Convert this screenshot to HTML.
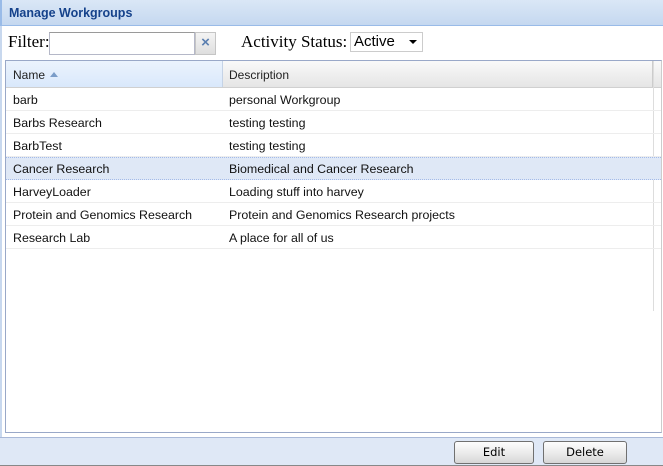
<!DOCTYPE html>
<html><head><style>
*{margin:0;padding:0;box-sizing:border-box}
body{width:663px;height:466px;overflow:hidden;background:#fff;font-family:"Liberation Sans",Arial,sans-serif;font-size:12px;position:relative}
.title{position:absolute;left:0;top:0;width:663px;height:26px;background:linear-gradient(#dae7f6,#c5d8f0);border-bottom:1px solid #99bbe8;border-left:2px solid #99bbe8;color:#15428b;font-weight:bold;font-size:12.5px;padding:6px 0 0 7px}
.lb{position:absolute;left:0;top:26px;width:2px;height:412px;background:#c8d8ee}
.filter{position:absolute;left:8px;top:32px;font-family:"Liberation Serif",serif;font-size:17px}
.inp{position:absolute;left:49px;top:32px;width:146px;height:23px;border:1px solid #b5b8c8;border-top-color:#9a9a9a}
.x{position:absolute;left:195px;top:32px;width:21px;height:23px;background:linear-gradient(#f4f4f4,#dedede);border:1px solid #c5c5c5;color:#5b7fb0;font-weight:bold;font-size:15px;text-align:center;line-height:20px}
.act{position:absolute;left:241px;top:32px;font-family:"Liberation Serif",serif;font-size:17px}
.sel{position:absolute;left:350px;top:32px;width:73px;height:20px;border:1px solid #ccc;font-size:15px;padding:0 0 0 3px;line-height:18px}
.sel:after{content:"";position:absolute;right:5px;top:7px;border:4px solid transparent;border-top:4px solid #000;border-bottom:0}
.grid{position:absolute;left:5px;top:60px;width:657px;height:373px;border:1px solid #99a8c8;border-right-color:#ccc}
.hd{position:absolute;left:0;top:0;width:655px;height:27px;background:linear-gradient(#f9f9f9,#e5e5e5);border-bottom:1px solid #d0d0d0}
.h1{position:absolute;left:0;top:0;width:217px;height:26px;background:linear-gradient(#ebf3fd,#d9e8fb);border-right:1px solid #c5d3e6;padding:7px 0 0 7px;color:#222}
.h2{position:absolute;left:217px;top:0;width:430px;height:26px;padding:7px 0 0 6px;color:#222;border-right:1px solid #ccc}
.tri{display:inline-block;border:4px solid transparent;border-bottom:5px solid #7a9cc8;border-top:0;margin-left:5px;vertical-align:2px}
.row{position:absolute;left:0;width:655px;height:23px;border-bottom:1px solid #ededed;color:#111;font-size:12.4px}
.row span{position:absolute;top:5px}
.row .a{left:7px}.row .b{left:223px}
.row.s{background:#dfe8f6;border-top:1px dotted #a3bae9;border-bottom:1px dotted #a3bae9}
.vl{position:absolute;left:647px;top:0;width:1px;height:250px;background:#ddd}
.foot{position:absolute;left:0;top:437px;width:663px;height:29px;background:#dfe8f6;border-top:1px solid #a8b8d8;border-bottom:1px solid #888}
.btn{position:absolute;top:441px;height:23px;border:1px solid #707070;border-radius:3px;background:linear-gradient(#fdfdfd,#e8e8e8 60%,#d6d6d6);text-align:center;line-height:21px;font-family:"DejaVu Sans",sans-serif;font-size:11.5px;color:#000}
</style></head><body>
<div class="title">Manage Workgroups</div>
<div class="lb"></div>
<div class="filter">Filter:</div>
<div class="inp"></div>
<div class="x">×</div>
<div class="act">Activity Status:</div>
<div class="sel">Active</div>
<div class="grid">
<div class="hd"><div class="h1">Name<span class="tri"></span></div><div class="h2">Description</div></div>
<div class="vl"></div>
<div class="row" style="top:27px"><span class="a">barb</span><span class="b">personal Workgroup</span></div>
<div class="row" style="top:50px"><span class="a">Barbs Research</span><span class="b">testing testing</span></div>
<div class="row" style="top:73px"><span class="a">BarbTest</span><span class="b">testing testing</span></div>
<div class="row s" style="top:96px"><span class="a" style="top:4px">Cancer Research</span><span class="b" style="top:4px">Biomedical and Cancer Research</span></div>
<div class="row" style="top:119px"><span class="a">HarveyLoader</span><span class="b">Loading stuff into harvey</span></div>
<div class="row" style="top:142px"><span class="a">Protein and Genomics Research</span><span class="b">Protein and Genomics Research projects</span></div>
<div class="row" style="top:165px"><span class="a">Research Lab</span><span class="b">A place for all of us</span></div>
</div>
<div class="foot"></div>
<div class="btn" style="left:454px;width:80px">Edit</div>
<div class="btn" style="left:543px;width:84px">Delete</div>
</body></html>
